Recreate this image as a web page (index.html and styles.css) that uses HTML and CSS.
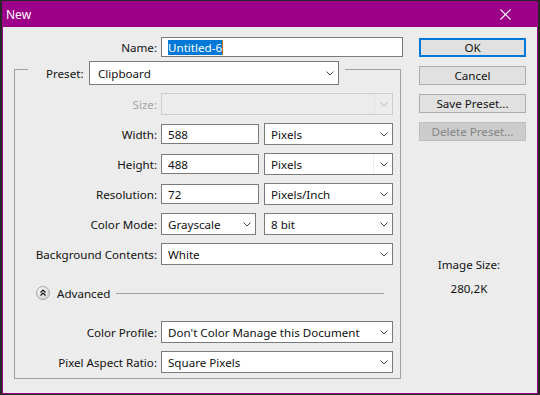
FILE: index.html
```html
<!DOCTYPE html>
<html lang="en">
<head>
    <meta charset="UTF-8">
    <title>New</title>
    <link rel="stylesheet" href="styles.css">
</head>
<body>
    <div class="window">
        <div class="titlebar">
            <span class="title">New</span>
            <svg class="close" width="11" height="11" viewBox="0 0 11 11">
                <path d="M0.5 0.5 L10.5 10.5 M10.5 0.5 L0.5 10.5" stroke="#fff" stroke-width="1.1" fill="none"/>
            </svg>
        </div>

        <div class="content">
            <div class="form">
                <div class="name-row">
                    <label>Name:</label>
                    <div class="textbox name"><span class="selected">Untitled-6</span><span class="caret"></span></div>
                </div>

                <div class="group">
                    <div class="group-head">
                        <label>Preset:</label>
                        <div class="select preset">
                            <span>Clipboard</span>
                            <svg class="chev" width="8" height="5" viewBox="0 0 8 5"><path d="M0.5 0.5 L4 4 L7.5 0.5"/></svg>
                        </div>
                    </div>

                    <div class="row">
                        <label class="off">Size:</label>
                        <div class="select off w-full">
                            <span></span>
                            <span class="split"></span>
                            <svg class="chev" width="8" height="5" viewBox="0 0 8 5"><path d="M0.5 0.5 L4 4 L7.5 0.5"/></svg>
                        </div>
                    </div>

                    <div class="row">
                        <label>Width:</label>
                        <div class="fields">
                            <div class="textbox w-num">588</div>
                            <div class="select w-unit">
                                <span>Pixels</span>
                                <svg class="chev" width="8" height="5" viewBox="0 0 8 5"><path d="M0.5 0.5 L4 4 L7.5 0.5"/></svg>
                            </div>
                        </div>
                    </div>

                    <div class="row">
                        <label>Height:</label>
                        <div class="fields">
                            <div class="textbox w-num">488</div>
                            <div class="select w-unit hover">
                                <span>Pixels</span>
                                <span class="split"></span>
                                <svg class="chev" width="8" height="5" viewBox="0 0 8 5"><path d="M0.5 0.5 L4 4 L7.5 0.5"/></svg>
                            </div>
                        </div>
                    </div>

                    <div class="row">
                        <label>Resolution:</label>
                        <div class="fields">
                            <div class="textbox w-num">72</div>
                            <div class="select w-unit">
                                <span>Pixels/Inch</span>
                                <svg class="chev" width="8" height="5" viewBox="0 0 8 5"><path d="M0.5 0.5 L4 4 L7.5 0.5"/></svg>
                            </div>
                        </div>
                    </div>

                    <div class="row">
                        <label>Color Mode:</label>
                        <div class="fields wide-gap">
                            <div class="select w-mode">
                                <span>Grayscale</span>
                                <svg class="chev" width="8" height="5" viewBox="0 0 8 5"><path d="M0.5 0.5 L4 4 L7.5 0.5"/></svg>
                            </div>
                            <div class="select w-unit">
                                <span>8 bit</span>
                                <svg class="chev" width="8" height="5" viewBox="0 0 8 5"><path d="M0.5 0.5 L4 4 L7.5 0.5"/></svg>
                            </div>
                        </div>
                    </div>

                    <div class="row">
                        <label>Background Contents:</label>
                        <div class="select w-full">
                            <span>White</span>
                            <svg class="chev" width="8" height="5" viewBox="0 0 8 5"><path d="M0.5 0.5 L4 4 L7.5 0.5"/></svg>
                        </div>
                    </div>

                    <div class="advanced">
                        <svg class="toggle" width="14" height="14" viewBox="0 0 14 14">
                            <defs>
                                <radialGradient id="knob" cx="0.4" cy="0.35" r="0.7">
                                    <stop offset="0" stop-color="#ffffff"/>
                                    <stop offset="1" stop-color="#cfcfcf"/>
                                </radialGradient>
                            </defs>
                            <circle cx="7" cy="7" r="6.5" fill="url(#knob)" stroke="#a8a8a8"/>
                            <path d="M4.5 6.5 L7 4 L9.5 6.5 M4.5 9.5 L7 7 L9.5 9.5" stroke="#111" stroke-width="1.2" fill="none"/>
                        </svg>
                        <span>Advanced</span>
                        <span class="rule"></span>
                    </div>

                    <div class="row gap-top">
                        <label>Color Profile:</label>
                        <div class="select w-full">
                            <span>Don't Color Manage this Document</span>
                            <svg class="chev" width="8" height="5" viewBox="0 0 8 5"><path d="M0.5 0.5 L4 4 L7.5 0.5"/></svg>
                        </div>
                    </div>

                    <div class="row">
                        <label>Pixel Aspect Ratio:</label>
                        <div class="select w-full">
                            <span>Square Pixels</span>
                            <svg class="chev" width="8" height="5" viewBox="0 0 8 5"><path d="M0.5 0.5 L4 4 L7.5 0.5"/></svg>
                        </div>
                    </div>
                </div>
            </div>

            <div class="side">
                <button class="btn default">OK</button>
                <button class="btn">Cancel</button>
                <button class="btn">Save Preset...</button>
                <button class="btn" disabled>Delete Preset...</button>

                <p class="size-label">Image Size:</p>
                <p class="size-value">280,2K</p>
            </div>
        </div>
    </div>
</body>
</html>
```

FILE: styles.css
```css
* {
    margin: 0;
    padding: 0;
    box-sizing: border-box;
}

body {
    background: #262626;
    font-family: "Noto Sans", sans-serif;
    font-size: 11.6px;
    color: #111;
    width: 540px;
    height: 395px;
    overflow: hidden;
}

.window {
    width: 536px;
    height: 393px;
    margin: 1px 0 0 2px;
    border: 1px solid #9c0089;
    border-top: none;
    background: #ececec;
}

.titlebar {
    height: 26px;
    margin: 0 -1px;
    background: #9c0089;
    display: flex;
    align-items: center;
    justify-content: space-between;
    padding-left: 4px;
}

.title {
    color: #fff;
    font-size: 12px;
}

.close {
    margin-right: 27px;
}

.content {
    display: flex;
}

.form {
    padding: 10px 0 0 11px;
    width: 398px;
}

label {
    text-align: right;
    white-space: nowrap;
}

label.off {
    color: #a3a3a3;
}

.name-row {
    display: grid;
    grid-template-columns: 143px 242px;
    column-gap: 4px;
    align-items: center;
    height: 20px;
}

.textbox {
    height: 20px;
    border: 1px solid #7a7a7a;
    background: #fff;
    padding-left: 6px;
    display: flex;
    align-items: center;
}

.name .selected {
    background: #0078d7;
    color: #fff;
    line-height: 15px;
}

.name .caret {
    width: 1px;
    height: 15px;
    background: #c07020;
}

.group {
    margin-top: 12px;
    width: 387px;
    border: 1px solid #a0a0a0;
    padding: 0 7px 5px 0;
}

.group-head {
    margin: -9px 0 0 13px;
    padding: 0 6px 0 18px;
    background: #ececec;
    width: fit-content;
    display: flex;
    align-items: center;
    gap: 5px;
    height: 24px;
}

.group-head label {
    width: 38px;
    text-align: left;
}

.select {
    height: 22px;
    border: 1px solid #7a7a7a;
    background: #fff;
    display: flex;
    align-items: center;
    padding: 0 4px 0 6px;
    white-space: nowrap;
}

.select > span:first-child {
    flex: 1;
}

.chev path {
    stroke: #444;
    stroke-width: 1;
    fill: none;
}

.select.preset {
    width: 250px;
    height: 24px;
    padding-left: 8px;
}

.select.off {
    border-color: #cccccc;
    background: #ececec;
}

.select.off .chev path {
    stroke: #b8b8b8;
}

.split {
    width: 1px;
    align-self: stretch;
    background: #e2e2e2;
    margin-right: 5px;
}

.select.hover .split {
    background: #ececec;
    margin-right: 6px;
}

.row {
    display: grid;
    grid-template-columns: 142px auto;
    column-gap: 4px;
    align-items: center;
    height: 22px;
    margin-top: 8px;
}

.row.gap-top {
    margin-top: 18px;
}

.fields {
    display: flex;
    align-items: center;
    gap: 5px;
}

.fields.wide-gap {
    gap: 8px;
}

.w-num {
    width: 98px;
}

.w-unit {
    width: 129px;
}

.w-mode {
    width: 95px;
}

.w-full {
    width: 232px;
}

.advanced {
    display: flex;
    align-items: center;
    height: 20px;
    margin: 18px 9px 0 21px;
}

.toggle {
    margin-right: 7px;
}

.rule {
    flex: 1;
    height: 1px;
    background: #a0a0a0;
    margin-left: 6px;
}

.side {
    margin-left: 18px;
    padding-top: 11px;
    width: 107px;
    display: flex;
    flex-direction: column;
}

.btn {
    height: 19px;
    margin-bottom: 9px;
    border: 1px solid #adadad;
    background: #e1e1e1;
    font-family: inherit;
    font-size: 11.6px;
    color: #111;
}

.btn.default {
    border: 2px solid #0078d7;
}

.btn:disabled {
    background: #cccccc;
    border-color: #bfbfbf;
    color: #838383;
}

.size-label,
.size-value {
    text-align: center;
    line-height: 16px;
    padding-right: 7px;
}

.size-label {
    margin-top: 107px;
}

.size-value {
    margin-top: 8px;
}
```
